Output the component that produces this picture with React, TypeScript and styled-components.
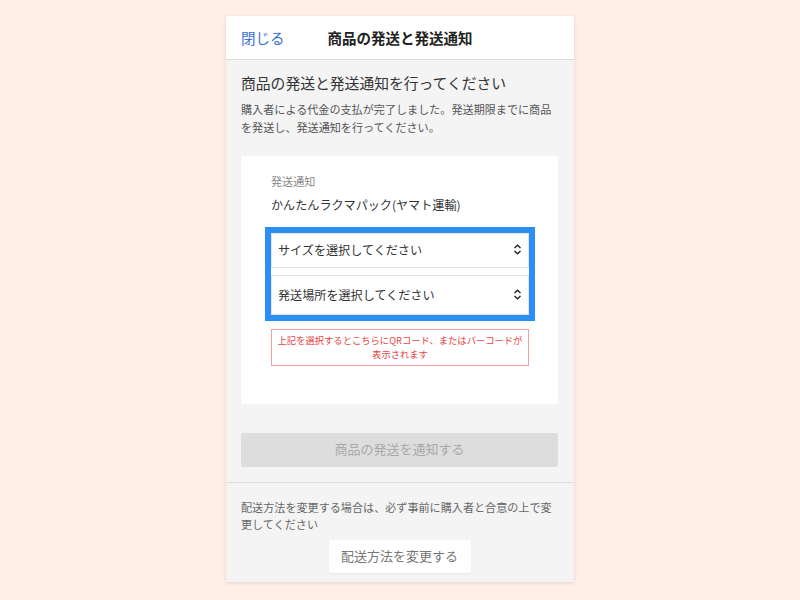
import { FC } from 'react';
import styled, { createGlobalStyle } from 'styled-components';

const GlobalStyle = createGlobalStyle`
  html, body {
    margin: 0;
    padding: 0;
    background: #fef0e7;
  }
  body {
    font-family: 'Noto Sans CJK JP', 'Noto Sans', sans-serif;
    color: #333;
  }
`;

const Page = styled.div`
  width: 800px;
  height: 600px;
  display: flex;
  justify-content: center;
  padding-top: 16px;
  box-sizing: border-box;
`;

const Card = styled.div`
  width: 348px;
  height: 566px;
  background: #f4f4f4;
  box-shadow: 0 1px 4px rgba(0, 0, 0, 0.12);
  display: flex;
  flex-direction: column;
`;

const Header = styled.header`
  height: 43px;
  flex-shrink: 0;
  background: #fff;
  border-bottom: 1px solid #dcdcdc;
  display: grid;
  grid-template-columns: 86px 1fr 86px;
  align-items: center;
  padding: 0 15px;
`;

const CloseLink = styled.a`
  color: #3a72d8;
  font-size: 14.5px;
  line-height: 20px;
  cursor: pointer;
`;

const Title = styled.h1`
  margin: 0;
  text-align: center;
  font-size: 14.5px;
  line-height: 20px;
  font-weight: 700;
  color: #222;
  white-space: nowrap;
`;

const Body = styled.section`
  padding: 13px 16px 15px 15px;
  border-bottom: 1px solid #dedede;
`;

const Heading = styled.h2`
  margin: 0;
  font-size: 14.8px;
  line-height: 20px;
  font-weight: 400;
  color: #333;
`;

const Lead = styled.p`
  margin: 8px 0 0;
  font-size: 11.1px;
  line-height: 17.5px;
  color: #555;
`;

const Panel = styled.div`
  margin-top: 20px;
  background: #fff;
  padding: 17px 29px 38px 30px;
`;

const Label = styled.div`
  font-size: 11.1px;
  line-height: 16px;
  color: #8a8a8a;
`;

const Carrier = styled.div`
  margin-top: 7px;
  font-size: 12.1px;
  line-height: 18px;
  color: #333;
`;

const SelectGroup = styled.div`
  margin-top: 19px;
  display: flex;
  flex-direction: column;
  gap: 7px;
  background: #fff;
  outline: 6px solid #2b8ff6;
`;

const SelectBox = styled.div<{ $h: number }>`
  height: ${({ $h }) => $h}px;
  box-sizing: border-box;
  border: 1px solid #e4e4e4;
  display: flex;
  align-items: center;
  justify-content: space-between;
  padding: 0 6px 2px 6px;
  font-size: 12.1px;
  color: #333;
  & svg {
    width: 9px;
    height: 11px;
  }
`;

const Notice = styled.div`
  margin-top: 14px;
  border: 1px solid #f3a0a0;
  color: #e8443f;
  font-size: 9.3px;
  line-height: 13.5px;
  text-align: center;
  padding: 4px 4px;
`;

const NotifyButton = styled.button`
  margin-top: 29px;
  width: 100%;
  height: 34px;
  padding: 0 0 3px;
  border: none;
  border-radius: 2px;
  background: #dddddd;
  color: #a9a9a9;
  font-family: inherit;
  font-size: 13px;
`;

const Footer = styled.section`
  padding: 16px 16px 8px 15px;
  display: flex;
  flex-direction: column;
  align-items: center;
`;

const FooterText = styled.p`
  margin: 0;
  align-self: stretch;
  font-size: 11.1px;
  line-height: 16.5px;
  color: #666;
`;

const ChangeButton = styled.button`
  margin-top: 8px;
  height: 33px;
  width: 142px;
  padding: 0 0 2px;
  border: none;
  border-radius: 2px;
  background: #fff;
  box-shadow: 0 1px 2px rgba(0, 0, 0, 0.06);
  color: #777;
  font-family: inherit;
  font-size: 13px;
`;

const Chevrons: FC = () => (
  <svg viewBox={'0 0 9 11'}>
    <path d={'M1.5 4 L4.5 1.3 L7.5 4 M1.5 7 L4.5 9.7 L7.5 7'} fill={'none'} stroke={'#222'} strokeWidth={1.4} />
  </svg>
);

const App: FC = () => {
  const selects = [
    { text: 'サイズを選択してください', h: 35 },
    { text: '発送場所を選択してください', h: 40 }
  ];

  return (
    <>
      <GlobalStyle />
      <Page>
        <Card>
          <Header>
            <CloseLink>閉じる</CloseLink>
            <Title>商品の発送と発送通知</Title>
            <span />
          </Header>
          <Body>
            <Heading>商品の発送と発送通知を行ってください</Heading>
            <Lead>購入者による代金の支払が完了しました。発送期限までに商品を発送し、発送通知を行ってください。</Lead>
            <Panel>
              <Label>発送通知</Label>
              <Carrier>かんたんラクマパック(ヤマト運輸)</Carrier>
              <SelectGroup>
                {selects.map(({ text, h }) => (
                  <SelectBox key={text} $h={h}>
                    {text}
                    <Chevrons />
                  </SelectBox>
                ))}
              </SelectGroup>
              <Notice>
                上記を選択するとこちらにQRコード、またはバーコードが
                <br />
                表示されます
              </Notice>
            </Panel>
            <NotifyButton disabled>商品の発送を通知する</NotifyButton>
          </Body>
          <Footer>
            <FooterText>配送方法を変更する場合は、必ず事前に購入者と合意の上で変更してください</FooterText>
            <ChangeButton>配送方法を変更する</ChangeButton>
          </Footer>
        </Card>
      </Page>
    </>
  );
};

export default App;
